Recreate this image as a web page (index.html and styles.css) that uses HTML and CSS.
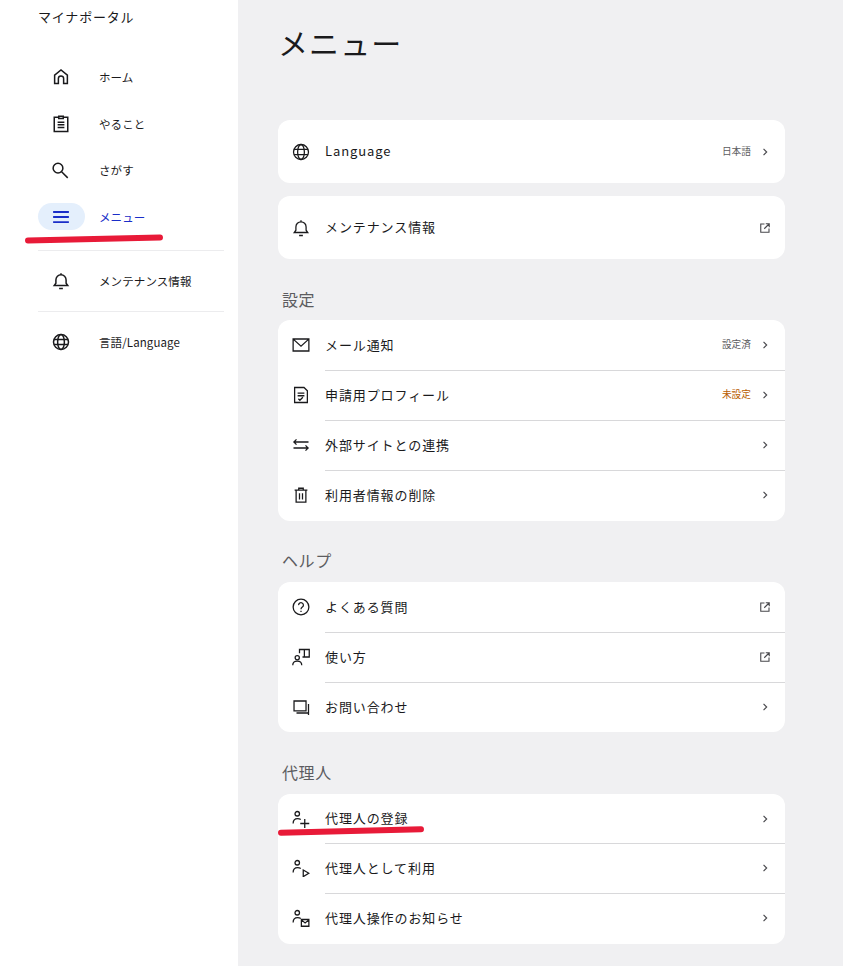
FILE: index.html
```html
<!DOCTYPE html>
<html lang="ja">
  <head>
    <meta charset="UTF-8" />
    <meta name="viewport" content="width=device-width, initial-scale=1.0" />
    <title>マイナポータル</title>
    <link rel="stylesheet" href="styles.css">
  </head>
  <body>
    <svg class="defs" width="0" height="0">
      <symbol id="i-bell" viewBox="0 0 24 24"><path d="M3 18h18l-2.200-3v-4.500a6.800 6.800 0 0 0-13.600 0V15zM12 1.500v2.200M9.500 22h5"/></symbol>
      <symbol id="i-globe" viewBox="0 0 24 24"><circle cx="12" cy="12" r="10"/><ellipse cx="12" cy="12" rx="4.500" ry="10"/><path d="M2.800 8.600h18.400M2.800 15.400h18.400"/></symbol>
      <symbol id="i-chevron" viewBox="0 0 24 24"><path d="M8.500 4.500 16 12l-7.500 7.500"/></symbol>
      <symbol id="i-external" viewBox="0 0 24 24"><path d="M11 4H3.500v16.500H20V13M13.500 3.500h7v7M20 4 10.500 13.500"/></symbol>
      <symbol id="i-person" viewBox="0 0 24 24"><circle cx="7" cy="5" r="3"/><path d="M1.500 18c0-4 2.500-6.500 6-6.500 1.500 0 3 .4 4.200 1.200"/></symbol>
    </svg>

    <aside class="sidebar">
      <div class="brand">マイナポータル</div>
      <nav class="nav nav-main">
        <a class="nav-item" href="#">
          <span class="nav-icon"><svg class="icon" viewBox="0 0 24 24"><path d="M3.500 20.500v-11L12 2.500l8.500 7v11h-5V14a3.500 3.500 0 0 0-7 0v6.500z"/></svg></span>
          <span>ホーム</span>
        </a>
        <a class="nav-item" href="#">
          <span class="nav-icon"><svg class="icon" viewBox="0 0 24 24"><path d="M9 3H3v19h18V3h-6M9 1.500h6V4.500H9zM7.500 9.500h9M7.500 13h9M7.500 16.500h9"/></svg></span>
          <span>やること</span>
        </a>
        <a class="nav-item" href="#">
          <span class="nav-icon"><svg class="icon" viewBox="0 0 24 24"><circle cx="8" cy="9.500" r="6.500"/><path d="M12.800 14.300 21 22.500"/></svg></span>
          <span>さがす</span>
        </a>
        <a class="nav-item active" href="#">
          <span class="nav-icon"><svg class="icon" viewBox="0 0 24 24"><path d="M1.500 5.300h21M1.500 12h21M1.500 18.700h21"/></svg></span>
          <span>メニュー</span>
          <span class="marker marker-nav"></span>
        </a>
      </nav>
      <nav class="nav">
        <a class="nav-item" href="#">
          <span class="nav-icon"><svg class="icon"><use href="#i-bell"/></svg></span>
          <span>メンテナンス情報</span>
        </a>
      </nav>
      <nav class="nav">
        <a class="nav-item" href="#">
          <span class="nav-icon"><svg class="icon"><use href="#i-globe"/></svg></span>
          <span>言語/Language</span>
        </a>
      </nav>
    </aside>

    <main class="main">
      <h1>メニュー</h1>

      <div class="card tall">
        <a class="row" href="#">
          <svg class="icon"><use href="#i-globe"/></svg>
          <span class="label">Language</span>
          <span class="value">日本語</span>
          <svg class="chevron"><use href="#i-chevron"/></svg>
        </a>
      </div>

      <div class="card tall">
        <a class="row" href="#">
          <svg class="icon"><use href="#i-bell"/></svg>
          <span class="label">メンテナンス情報</span>
          <svg class="external"><use href="#i-external"/></svg>
        </a>
      </div>

      <h2>設定</h2>
      <div class="card settings">
        <a class="row" href="#">
          <svg class="icon" viewBox="0 0 24 24"><path d="M1.500 4h21v16h-21zM2 4.500l10 9 10-9"/></svg>
          <span class="label">メール通知</span>
          <span class="value">設定済</span>
          <svg class="chevron"><use href="#i-chevron"/></svg>
        </a>
        <a class="row" href="#">
          <svg class="icon" viewBox="0 0 24 24"><path d="M3.500 2H16l4.500 4.500V22h-17zM7.500 9.500h9M7.500 13h9M8.500 17l2 2 4-4"/></svg>
          <span class="label">申請用プロフィール</span>
          <span class="value warn">未設定</span>
          <svg class="chevron"><use href="#i-chevron"/></svg>
        </a>
        <a class="row" href="#">
          <svg class="icon" viewBox="0 0 24 24"><path d="M22 8H2.500M6 4.500 2.500 8 6 11.500M2 16h19.500M18 12.500l3.500 3.500-3.500 3.500"/></svg>
          <span class="label">外部サイトとの連携</span>
          <svg class="chevron"><use href="#i-chevron"/></svg>
        </a>
        <a class="row" href="#">
          <svg class="icon" viewBox="0 0 24 24"><path d="M3.500 5.500h17M9 5.500V3h6v2.500M5.500 5.500v16h13v-16M10 9.500V18M14 9.500V18"/></svg>
          <span class="label">利用者情報の削除</span>
          <svg class="chevron"><use href="#i-chevron"/></svg>
        </a>
      </div>

      <h2>ヘルプ</h2>
      <div class="card">
        <a class="row" href="#">
          <svg class="icon" viewBox="0 0 24 24"><circle cx="12" cy="12" r="10.500"/><path d="M8.800 9.500a3.200 3.200 0 1 1 5 2.600c-1.200.9-1.800 1.400-1.800 2.900M12 17v1.500"/></svg>
          <span class="label">よくある質問</span>
          <svg class="external"><use href="#i-external"/></svg>
        </a>
        <a class="row" href="#">
          <svg class="icon" viewBox="0 0 24 24"><circle cx="7" cy="13" r="2.800"/><path d="M1 23c0-3.500 2.500-5.500 6-5.500s6 2 6 5.500M10 7V2h13v10h-9M16.500 2v10"/></svg>
          <span class="label">使い方</span>
          <svg class="external"><use href="#i-external"/></svg>
        </a>
        <a class="row" href="#">
          <svg class="icon" viewBox="0 0 24 24"><path d="M2.700 4h16v13.300h-16zM22 8v14.500M22 20H6"/></svg>
          <span class="label">お問い合わせ</span>
          <svg class="chevron"><use href="#i-chevron"/></svg>
        </a>
      </div>

      <h2>代理人</h2>
      <div class="card agent">
        <a class="row" href="#">
          <svg class="icon" viewBox="0 0 24 24"><use href="#i-person" width="24" height="24"/><path d="M17 12v12M11 18h12"/></svg>
          <span class="label">代理人の登録</span>
          <svg class="chevron"><use href="#i-chevron"/></svg>
          <span class="marker marker-row"></span>
        </a>
        <a class="row" href="#">
          <svg class="icon" viewBox="0 0 24 24"><use href="#i-person" width="24" height="24"/><path d="M15 14.700 22.500 19 15 23.500z"/></svg>
          <span class="label">代理人として利用</span>
          <svg class="chevron"><use href="#i-chevron"/></svg>
        </a>
        <a class="row" href="#">
          <svg class="icon" viewBox="0 0 24 24"><use href="#i-person" width="24" height="24"/><path d="M12.500 14h10v9h-10zM12.500 14.500l5 4 5-4"/></svg>
          <span class="label">代理人操作のお知らせ</span>
          <svg class="chevron"><use href="#i-chevron"/></svg>
        </a>
      </div>
    </main>
  </body>
</html>
```

FILE: styles.css
```css
body {
  margin: 0;
  display: flex;
  min-height: 966px;
  font-family: "Noto Sans CJK JP", "Noto Sans", sans-serif;
  background-color: #f0f0f2;
  color: #1a1a1c;
}

a {
  color: inherit;
  text-decoration: none;
}

.defs {
  position: absolute;
}

.icon {
  display: block;
  width: 18px;
  height: 18px;
  flex: none;
  fill: none;
  stroke: #1a1a1c;
  stroke-width: 1.7;
}

/* sidebar */
.sidebar {
  width: 238px;
  flex: none;
  box-sizing: border-box;
  background: white;
  padding: 8px 14px 0 38px;
}

.brand {
  font-size: 13px;
  line-height: 18px;
  letter-spacing: 0.8px;
}

.nav {
  padding: 16px 0;
  border-bottom: 1px solid #ececee;
}

.nav:last-child {
  border-bottom: none;
}

.nav-main {
  display: flex;
  flex-direction: column;
  gap: 18.67px;
  margin-top: 37px;
  padding: 0 0 19px;
}

.nav-item {
  position: relative;
  display: flex;
  align-items: center;
  gap: 14px;
  height: 28px;
  font-size: 11.5px;
  letter-spacing: 0.1px;
}

.nav-icon {
  width: 46px;
  height: 27px;
  padding-right: 1px;
  flex: none;
  display: flex;
  align-items: center;
  justify-content: center;
  border-radius: 14px;
}

.nav-icon .icon {
  stroke-width: 2;
}

.nav-item.active {
  color: #1a2ec8;
}

.nav-item.active .nav-icon {
  background-color: #e4effc;
}

.nav-item.active .icon {
  stroke: #1a2ec8;
  stroke-width: 2.4;
}

.marker {
  position: absolute;
  height: 6px;
  border-radius: 3px;
  background-color: #e81a38;
}

.marker-nav {
  left: -13px;
  top: 33px;
  width: 138px;
  transform: rotate(-1.2deg);
}

.marker-row {
  left: 0;
  top: 34px;
  width: 146px;
  transform: rotate(-1.4deg);
}

/* main */
.main {
  flex: 1;
  padding: 20px 58px 0 40px;
}

h1 {
  font-size: 30px;
  font-weight: 400;
  line-height: 44px;
  letter-spacing: 1.1px;
  margin: 0 0 56px;
}

h2 {
  font-size: 16px;
  font-weight: 400;
  line-height: 24px;
  letter-spacing: 0.6px;
  color: #5c5c60;
  margin: 28px 0 10px 4px;
}

.card {
  background: white;
  border-radius: 12px;
}

.card.tall {
  margin-bottom: 13px;
}

.card.tall + h2 {
  margin-top: 28px;
  margin-bottom: 9px;
}

.card.tall .row {
  height: 63px;
}

.card.settings {
  padding-bottom: 1px;
}

.settings + h2 {
  margin-top: 27px;
}

.card.agent {
  padding-bottom: 1px;
}

.agent .row:first-child {
  height: 49px;
}

.row {
  position: relative;
  display: flex;
  align-items: center;
  gap: 15px;
  height: 50px;
  padding: 0 14px;
  font-size: 13px;
  letter-spacing: 0.9px;
}

.row + .row::before {
  content: "";
  position: absolute;
  left: 47px;
  right: 0;
  top: 0;
  border-top: 1px solid #d8d8da;
}

.label {
  flex: 1;
  padding-bottom: 2px;
}

.value {
  font-size: 9.7px;
  letter-spacing: 0;
  color: #5c5c60;
  margin-right: -6px;
  padding-bottom: 2px;
}

.value.warn {
  color: #b85c00;
}

.chevron {
  width: 10px;
  height: 10px;
  margin-right: 1px;
  flex: none;
  fill: none;
  stroke: #48484c;
  stroke-width: 2.8;
}

.external {
  width: 12px;
  height: 12px;
  flex: none;
  fill: none;
  stroke: #48484c;
  stroke-width: 2.2;
}
```
